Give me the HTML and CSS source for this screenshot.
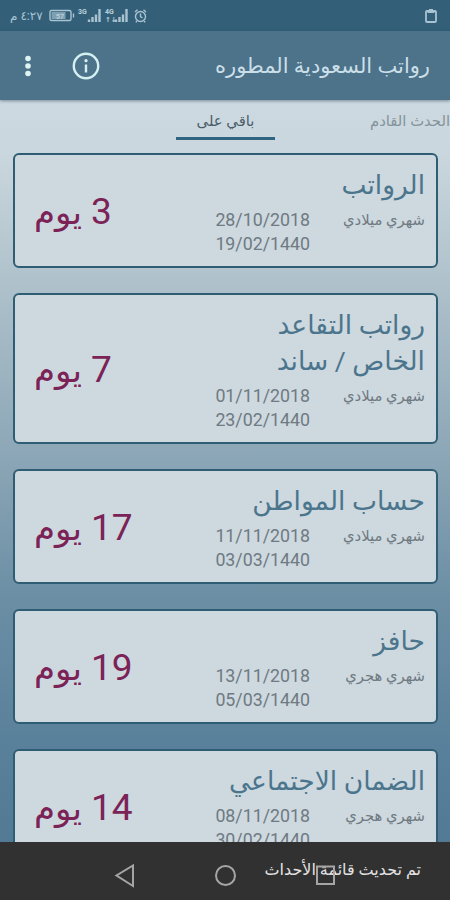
FILE: index.html
```html
<!DOCTYPE html>
<html lang="ar" dir="rtl">

<head>
    <meta charset="UTF-8">
    <meta name="viewport" content="width=device-width, initial-scale=1.0">
    <title>رواتب السعودية المطوره</title>
    <link rel="stylesheet" href="styles.css">
</head>

<body>
    <div class="status-bar">
        <svg class="clipboard" width="14" height="16" viewBox="0 0 14 16">
            <rect x="2" y="3" width="10" height="11" rx="1" />
            <path d="M3.500 4h7M5 2h4" />
        </svg>
        <div class="status-left">
            <svg width="100" height="18" viewBox="0 0 100 18">
                <g class="line">
                    <rect x="2" y="3.5" width="21" height="10" rx="1.5" />
                    <path d="M25.5 6.5v4" />
                    <circle cx="92.500" cy="9.500" r="5" />
                    <path d="M92.500 6.500v3.200l2 1.300M87 5l2.500-2.200M98 5l-2.500-2.200M89 14l-1.200 1.400M96 14l1.200 1.400" />
                </g>
                <rect class="fill" x="3.500" y="5" width="14" height="7" />
                <g class="bars">
                    <path d="M41 15v-2.500M44.500 15v-5M48 15V7.500M51.500 15V2" />
                    <path d="M68 15v-2.500M71.500 15v-5M75 15V7.500M78.500 15V2" />
                </g>
                <text x="8" y="12">57</text>
                <text x="30" y="7">3G</text>
                <text x="57" y="7">4G</text>
                <text x="57" y="15">↑↓</text>
            </svg>
            <span class="time">٤:٢٧ م</span>
        </div>
    </div>

    <div class="app-bar">
        <h1 class="app-title">رواتب السعودية المطوره</h1>
        <div class="actions">
            <svg width="28" height="28" viewBox="0 0 28 28">
                <circle class="ring" cx="14" cy="14" r="12.200" />
                <path class="ring" d="M14 12.500v8" />
                <circle class="dot" cx="14" cy="8.700" r="1.600" />
            </svg>
            <svg width="8" height="24" viewBox="0 0 8 24">
                <circle class="dot" cx="4" cy="4.500" r="2.800" />
                <circle class="dot" cx="4" cy="12" r="2.800" />
                <circle class="dot" cx="4" cy="19.500" r="2.800" />
            </svg>
        </div>
    </div>

    <div class="tabs">
        <div class="tab">الحدث القادم</div>
        <div class="tab active">باقي على</div>
    </div>

    <div class="list">
        <div class="card">
            <div class="info">
                <h2 class="name">الرواتب</h2>
                <div class="details">
                    <span class="type">شهري ميلادي</span>
                    <span class="dates">28/10/2018<br>19/02/1440</span>
                </div>
            </div>
            <div class="days"><span class="count">3</span> <span>يوم</span></div>
        </div>
        <div class="card">
            <div class="info">
                <h2 class="name">رواتب التقاعد<br>الخاص / ساند</h2>
                <div class="details">
                    <span class="type">شهري ميلادي</span>
                    <span class="dates">01/11/2018<br>23/02/1440</span>
                </div>
            </div>
            <div class="days"><span class="count">7</span> <span>يوم</span></div>
        </div>
        <div class="card">
            <div class="info">
                <h2 class="name">حساب المواطن</h2>
                <div class="details">
                    <span class="type">شهري ميلادي</span>
                    <span class="dates">11/11/2018<br>03/03/1440</span>
                </div>
            </div>
            <div class="days"><span class="count">17</span> <span>يوم</span></div>
        </div>
        <div class="card">
            <div class="info">
                <h2 class="name">حافز</h2>
                <div class="details">
                    <span class="type">شهري هجري</span>
                    <span class="dates">13/11/2018<br>05/03/1440</span>
                </div>
            </div>
            <div class="days"><span class="count">19</span> <span>يوم</span></div>
        </div>
        <div class="card">
            <div class="info">
                <h2 class="name">الضمان الاجتماعي</h2>
                <div class="details">
                    <span class="type">شهري هجري</span>
                    <span class="dates">08/11/2018<br>30/02/1440</span>
                </div>
            </div>
            <div class="days"><span class="count">14</span> <span>يوم</span></div>
        </div>
    </div>

    <div class="bottom-bar">
        <span class="toast">تم تحديث قائمة الأحداث</span>
        <svg class="nav" width="450" height="58" viewBox="0 0 450 58">
            <path d="M133 23.500v20.500l-16.500-10.500z" />
            <circle cx="225.500" cy="33.500" r="9.500" />
            <rect x="317" y="24.500" width="17" height="17.500" />
        </svg>
    </div>
</body>

</html>
```
FILE: styles.css
```css
* {
    box-sizing: border-box;
}

body {
    font-family: Roboto, 'DejaVu Sans', sans-serif;
    display: flex;
    flex-direction: column;
    width: 450px;
    height: 900px;
    margin: 0;
    overflow: hidden;
    background: linear-gradient(to bottom, #cdd9e0 100px, #cbd7de 150px, #aec1cb 285px, #8ba6b6 460px, #6b8ea4 600px, #5a819b 740px, #537a94 842px);
}

h1,
h2 {
    margin: 0;
    font-weight: normal;
}

.status-bar {
    display: flex;
    flex: none;
    justify-content: space-between;
    align-items: center;
    height: 31px;
    padding: 0 12px 0 10px;
    background: #335f78;
    color: #a9c3d2;
}

.clipboard {
    fill: none;
    stroke: #a9c3d2;
    stroke-width: 1.8;
}

.status-left {
    display: flex;
    align-items: center;
    gap: 5px;
}

.status-left .line {
    fill: none;
    stroke: #a9c3d2;
    stroke-width: 1.4;
}

.status-left .fill {
    fill: #7f9fb2;
}

.status-left .bars {
    fill: none;
    stroke: #a9c3d2;
    stroke-width: 2.4;
}

.status-left text {
    direction: ltr;
    fill: #b9d0dc;
    font-size: 7px;
    font-weight: bold;
}

.time {
    font-size: 12px;
}

.app-bar {
    display: flex;
    flex: none;
    justify-content: space-between;
    align-items: center;
    height: 69px;
    padding: 0 20px 0 24px;
    background: #4d738b;
    box-shadow: 0 1px 3px rgba(40, 60, 75, 0.5);
}

.app-title {
    color: #cbdfe8;
    font-size: 21px;
}

.actions {
    display: flex;
    align-items: center;
    gap: 40px;
}

.actions .ring {
    fill: none;
    stroke: #d5f0f0;
    stroke-width: 2.4;
}

.actions .dot {
    fill: #dff3f3;
}

.tabs {
    display: flex;
    flex: none;
    justify-content: space-between;
    height: 40px;
    padding-left: 176px;
}

.tab {
    height: 40px;
    color: #84939c;
    font-size: 14.800px;
    line-height: 42px;
}

.tab.active {
    width: 99px;
    border-bottom: 3px solid #2f6580;
    color: #4a5e6b;
    text-align: center;
}

.list {
    display: flex;
    flex: 1;
    flex-direction: column;
    gap: 25px;
    min-height: 0;
    padding: 13px 12px 0 13px;
    overflow: hidden;
}

.card {
    display: flex;
    flex: none;
    justify-content: space-between;
    align-items: center;
    padding: 12px 11px 10px 19px;
    border: 2px solid #2f5d74;
    border-radius: 6px;
    background: #cdd8df;
}

.name {
    color: #4b758c;
    font-size: 26.500px;
    line-height: 36px;
    white-space: nowrap;
}

.details {
    display: flex;
    margin-top: 5px;
    color: #6f7a82;
}

.type {
    width: 115px;
    font-size: 14.800px;
    line-height: 24px;
}

.dates {
    direction: ltr;
    font-size: 17.800px;
    line-height: 24px;
}

.days {
    display: flex;
    align-items: baseline;
    gap: 9px;
    color: #7b2357;
    font-size: 34px;
    line-height: 48px;
}

.count {
    font-size: 37px;
}

.bottom-bar {
    position: relative;
    flex: none;
    height: 58px;
    padding-right: 29px;
    background: #313131;
}

.toast {
    color: #e2e2e2;
    font-size: 16px;
    line-height: 56px;
}

.nav {
    position: absolute;
    top: 0;
    left: 0;
    fill: none;
    stroke: #a5a5a5;
    stroke-width: 2;
}
```
